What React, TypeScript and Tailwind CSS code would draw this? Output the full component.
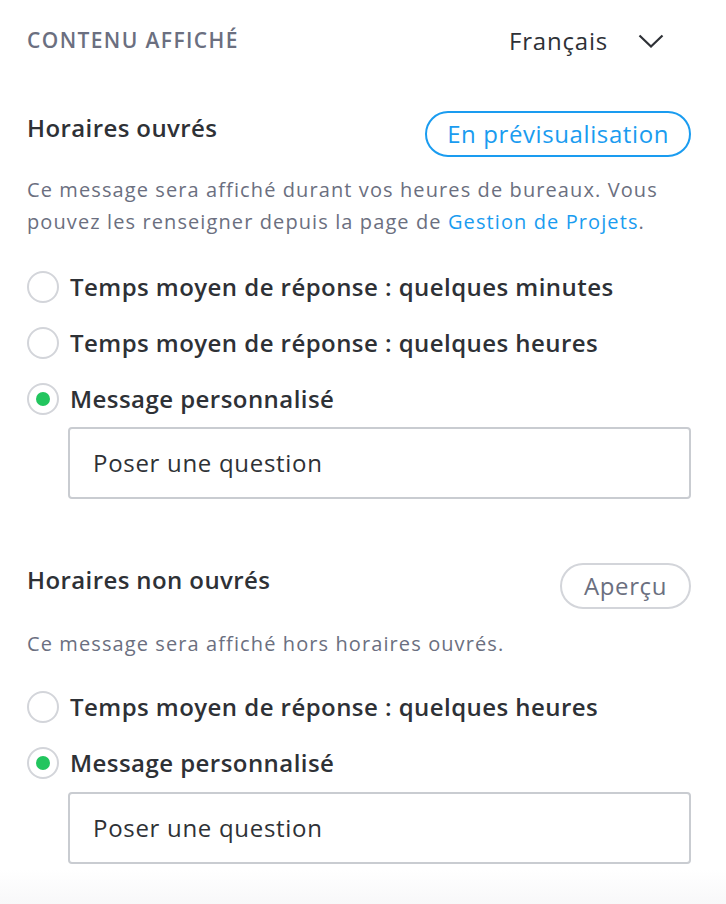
import React from "react";

// bloc de réglages : contenu affiché selon les horaires

const font = { fontFamily: '"Open Sans", "Liberation Sans", sans-serif' };

function Radio({ checked, label }: { checked?: boolean; label: string }) {
  return (
    <label className="flex h-[32px] items-center gap-[11px]">
      <span className="flex h-[32px] w-[32px] shrink-0 items-center justify-center rounded-full border-2 border-[#d3d5da] bg-white">
        {checked && <span className="h-[14px] w-[14px] rounded-full bg-[#22c55e]" />}
      </span>
      <span className="whitespace-nowrap text-[24px] font-semibold leading-[32px] tracking-[0.45px] text-[#2e3136]">
        {label}
      </span>
    </label>
  );
}

function Field({ value }: { value: string }) {
  return (
    <div className="ml-[41px] flex h-[72px] items-center rounded-[4px] border-2 border-[#c9ccd1] bg-white px-[23px] text-[24px] tracking-[0.7px] text-[#2e3136]">
      {value}
    </div>
  );
}

export default function App() {
  return (
    <div
      className="relative min-h-[904px] w-[726px] overflow-hidden bg-white pl-[27px] pr-[35px]"
      style={font}
    >
      <div className="mt-[25px] flex h-[32px] items-center justify-between">
        <p className="text-[21px] font-semibold tracking-[1.4px] text-[#6b6f80]">
          CONTENU AFFICHÉ
        </p>
        <button className="mr-[27px] flex items-center gap-[30px] text-[24px] tracking-[0.8px] text-[#2e3136]">
          Français
          <svg width="26" height="14" viewBox="0 0 26 14" fill="none">
            <path d="M1.5 1.5 13 12.5 24.5 1.5" stroke="#2e3136" strokeWidth="2.2" />
          </svg>
        </button>
      </div>

      {/* Horaires ouvrés */}
      <div className="mt-[54px] flex items-start justify-between">
        <h2 className="mt-[1px] text-[24px] font-semibold leading-[32px] tracking-[0.4px] text-[#2e3136]">
          Horaires ouvrés
        </h2>
        <button className="h-[46px] rounded-full border-2 border-[#1a9cf0] px-[20px] text-[24px] leading-[32px] tracking-[0.6px] text-[#1a9cf0]">
          En prévisualisation
        </button>
      </div>
      <p className="mt-[17px] text-[20px] leading-[32px] tracking-[1.1px] text-[#6b6f80]">
        Ce message sera affiché durant vos heures de bureaux. Vous pouvez les
        renseigner depuis la page de{" "}
        <a className="text-[#1a9cf0]">Gestion de Projets</a>.
      </p>
      <div className="mt-[33px] flex flex-col gap-[24px]">
        <Radio label="Temps moyen de réponse : quelques minutes" />
        <Radio label="Temps moyen de réponse : quelques heures" />
        <Radio checked label="Message personnalisé" />
      </div>
      <div className="mt-[12px]">
        <Field value="Poser une question" />
      </div>

      {/* Horaires non ouvrés */}
      <div className="mt-[64px] flex items-start justify-between">
        <h2 className="mt-[1px] text-[24px] font-semibold leading-[32px] tracking-[0.4px] text-[#2e3136]">
          Horaires non ouvrés
        </h2>
        <button className="h-[46px] rounded-full border-2 border-[#d3d5da] px-[22px] text-[24px] leading-[32px] tracking-[0.6px] text-[#6b6f80]">
          Aperçu
        </button>
      </div>
      <p className="mt-[19px] text-[20px] leading-[32px] tracking-[1.1px] text-[#6b6f80]">
        Ce message sera affiché hors horaires ouvrés.
      </p>
      <div className="mt-[31px] flex flex-col gap-[24px]">
        <Radio label="Temps moyen de réponse : quelques heures" />
        <Radio checked label="Message personnalisé" />
      </div>
      <div className="mt-[13px]">
        <Field value="Poser une question" />
      </div>

      <div className="absolute inset-x-0 bottom-0 h-[34px] bg-gradient-to-b from-white to-[#f8f8f9]" />
    </div>
  );
}
